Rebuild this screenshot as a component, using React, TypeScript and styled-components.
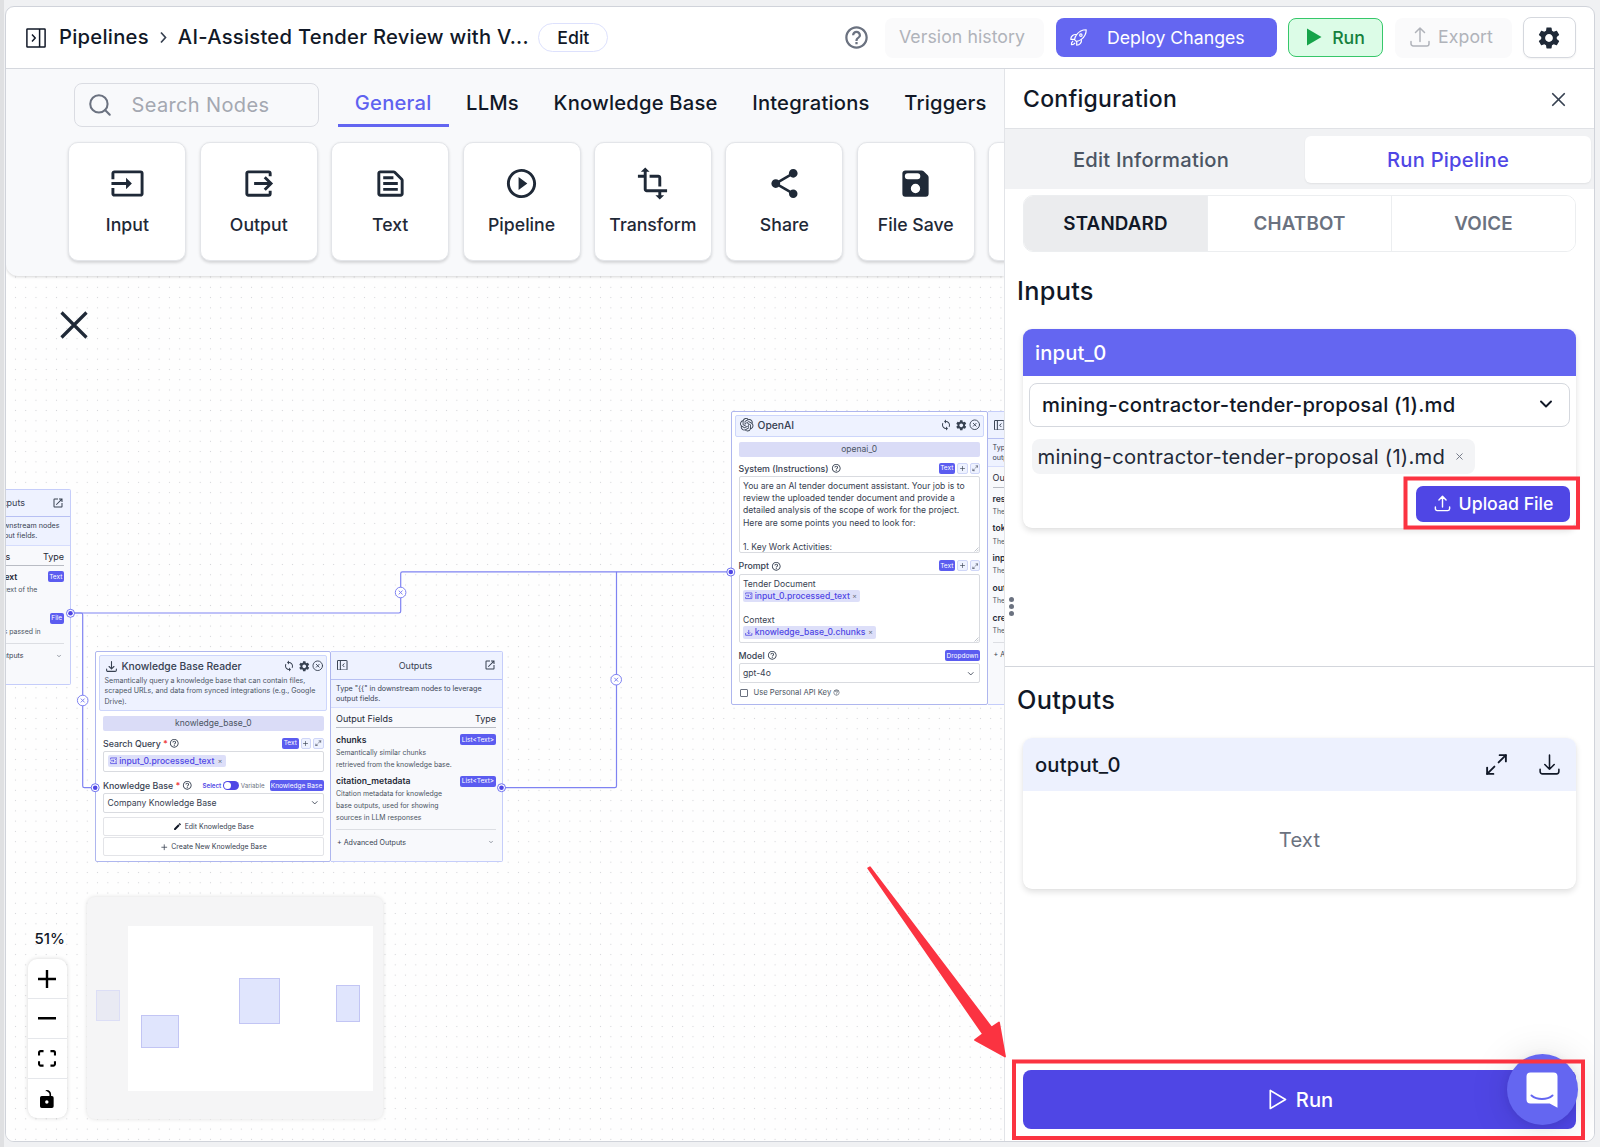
import React from "react";
import styled, { createGlobalStyle, css } from "styled-components";
import {
  MdInput,
  MdOutlineOutput,
  MdOutlineTextSnippet,
  MdPlayCircleOutline,
  MdTransform,
  MdShare,
  MdSettings,
  MdHelpOutline,
  MdSync,
  MdEdit,
  MdOpenInNew,
} from "react-icons/md";
import { HiOutlineRocketLaunch, HiOutlineArrowUpTray, HiOutlineArrowDownTray } from "react-icons/hi2";
import { SiOpenai } from "react-icons/si";
import { ChevronDown, CircleX, Maximize2, Plus, Search, X } from "lucide-react";

const Global = createGlobalStyle`
  *, *::before, *::after { box-sizing: border-box; }
  body {
    margin: 0;
    font-family: Inter, "Liberation Sans", sans-serif;
    color: #111827;
    background: #f0f1f3;
  }
  button { font: inherit; color: inherit; cursor: pointer; }
  svg { display: block; flex: none; }
`;

/* ---------- shell ---------- */

const Page = styled.div`
  position: relative;
  width: 1600px;
  height: 1147px;
  overflow: hidden;
  padding: 6px 5px 5px 5px;
  background: linear-gradient(90deg, #dfe0e2 4px, #f0f1f3 4px);
`;

const Window = styled.div`
  display: flex;
  flex-direction: column;
  width: 1590px;
  height: 1136px;
  border: 1px solid #d0d3da;
  border-radius: 9px;
  background: #fff;
  overflow: hidden;
`;

const Header = styled.header`
  display: flex;
  align-items: center;
  flex: none;
  height: 62px;
  padding: 0 18.5px 0 19.5px;
  border-bottom: 1px solid #d5d8de;
`;

const Crumbs = styled.nav`
  display: flex;
  align-items: center;
  padding-bottom: 2px;
  font-size: 20.2px;
  font-weight: 500;
  letter-spacing: 0.27px;
  color: #111827;
`;

const Crumb = styled.span<{ $left: number; $width?: number }>`
  margin-left: ${(p) => p.$left}px;
  width: ${(p) => (p.$width ? p.$width + "px" : "auto")};
  white-space: nowrap;
`;

const EditPill = styled.button`
  width: 70px;
  height: 29px;
  margin-left: 10.5px;
  padding: 0 0 1px;
  border: 1.3px solid #dde1fd;
  border-radius: 15px;
  background: #fff;
  font-size: 17.7px;
  font-weight: 500;
`;

const Actions = styled.div`
  display: flex;
  align-items: center;
  gap: 11.5px;
  margin-left: auto;
`;

const HelpIcon = styled.span`
  margin-right: 3.5px;
  color: #6b7280;
`;

const ActionButton = styled.button<{ $kind: "muted" | "primary" | "success" | "plain"; $w: number }>`
  display: flex;
  align-items: center;
  justify-content: center;
  width: ${(p) => p.$w}px;
  height: 40px;
  padding: 0 0 1px;
  border: 1px solid transparent;
  border-radius: 8px;
  font-size: 17.7px;
  ${(p) =>
    p.$kind === "muted" &&
    css`
      padding: 0 5px 2px 0;
      background: #fafafb;
      color: #b0b3ba;
      letter-spacing: 0.06px;
    `}
  ${(p) =>
    p.$kind === "primary" &&
    css`
      height: 39px;
      justify-content: flex-start;
      padding-left: 12.5px;
      background: #6466f1;
      color: #fff;
      gap: 19px;
    `}
  ${(p) =>
    p.$kind === "success" &&
    css`
      height: 39px;
      background: #dcfce7;
      border: 1.4px solid #36c76a;
      color: #15803d;
      font-weight: 500;
      gap: 10px;
    `}
  ${(p) =>
    p.$kind === "plain" &&
    css`
      height: 41px;
      padding: 0;
      background: #fff;
      border: 1.4px solid #d5d8de;
      color: #1f2937;
      box-shadow: 0 1px 2px rgba(0, 0, 0, 0.05);
    `}
`;

const Body = styled.div`
  display: flex;
  flex: 1;
  min-height: 0;
`;

const Workspace = styled.main`
  display: flex;
  flex-direction: column;
  width: 998px;
  min-width: 0;
  overflow: hidden;
`;

/* ---------- node palette ---------- */

const Palette = styled.section`
  position: relative;
  z-index: 3;
  flex: none;
  height: 207px;
  background: #f8f9fb;
  border-radius: 0 0 0 12px;
  box-shadow: 0 1px 3px rgba(0, 0, 0, 0.16);
  overflow: hidden;
`;

const PaletteTop = styled.div`
  display: flex;
  height: 73px;
  padding: 14px 0 0 68px;
`;

const SearchBox = styled.div`
  display: flex;
  align-items: center;
  gap: 18.5px;
  width: 245px;
  height: 44px;
  padding-left: 12px;
  border: 1.3px solid #dadce2;
  border-radius: 8px;
  color: #a4a8b1;
  font-size: 20px;
  letter-spacing: 0.36px;
`;

const Tabs = styled.div`
  display: flex;
  height: 45px;
  margin-left: 18.5px;
`;

const Tab = styled.button<{ $active?: boolean }>`
  height: 44px;
  padding: 0 17.3px 3px;
  border: 0;
  border-bottom: 3px solid ${(p) => (p.$active ? "#6366f1" : "transparent")};
  background: none;
  color: ${(p) => (p.$active ? "#5f62f0" : "#111827")};
  font-size: 20.2px;
  font-weight: 500;
  letter-spacing: 0.2px;
  white-space: nowrap;
`;

const CardRow = styled.div`
  display: flex;
  gap: 13.4px;
  padding-left: 62.4px;
`;

const NodeCard = styled.button`
  display: flex;
  flex-direction: column;
  align-items: center;
  flex: none;
  width: 118px;
  height: 119px;
  padding: 23px 0 0;
  border: 1px solid #e3e5e9;
  border-radius: 10px;
  background: #fff;
  box-shadow: 0 1.5px 3px rgba(0, 0, 0, 0.14);
  color: #1f2937;
  font-size: 17.7px;
  font-weight: 500;
  line-height: 22px;
  gap: 13px;
`;

/* ---------- canvas ---------- */

const Canvas = styled.section`
  position: relative;
  flex: 1;
  overflow: hidden;
  background-color: #fefefe;
  background-image: radial-gradient(circle at 50% 50%, #d3d4d8 0.55px, transparent 0.95px);
  background-size: 10.27px 10.27px;
  background-position: 4.3px 6.2px;
`;

const At = styled.div<{ $x: number; $y: number }>`
  position: absolute;
  left: ${(p) => p.$x - 6}px;
  top: ${(p) => p.$y - 276}px;
`;

const Edges = styled.svg`
  position: absolute;
  left: 0;
  top: 0;
`;

const NodeShell = styled(At)`
  display: flex;
`;

const NodeMain = styled.div<{ $w: number; $h: number }>`
  position: relative;
  width: ${(p) => p.$w}px;
  height: ${(p) => p.$h}px;
  padding: 3px;
  border: 1.3px solid #aeb6ee;
  border-radius: 2px;
  background: #fff;
`;

const NodeHead = styled.div<{ $h: number; $pt?: number }>`
  height: ${(p) => p.$h}px;
  padding: ${(p) => p.$pt ?? 4}px 2.2px 0 4.5px;
  border: 1px solid #cdd6fb;
  border-radius: 2px;
  background: #eef2ff;
`;

const NodeTitleRow = styled.div`
  display: flex;
  align-items: center;
  height: 13px;
  color: #374151;
`;

const NodeTitle = styled.span`
  margin-left: 4px;
  font-size: 10.3px;
  font-weight: 500;
  white-space: nowrap;
`;

const HeadTools = styled.span`
  display: flex;
  align-items: center;
  gap: 2.8px;
  margin-left: auto;

  svg:last-child {
    margin-left: -1.2px;
  }
`;

const NodeDesc = styled.div`
  margin-top: 3.6px;
  font-size: 7.1px;
  line-height: 10.2px;
  color: #4b5563;
  white-space: nowrap;
`;

const NodeBody = styled.div`
  display: flex;
  flex-direction: column;
  padding: 5px 3.5px 0 4px;
`;

const NameBar = styled.div`
  height: 15px;
  border-radius: 2px;
  background: #dadcf7;
  color: #4b5563;
  font-size: 8.5px;
  line-height: 15px;
  text-align: center;
`;

const LabelRow = styled.div<{ $mt: number }>`
  display: flex;
  align-items: center;
  height: 12px;
  margin-top: ${(p) => p.$mt}px;
  color: #374151;
  font-size: 8.8px;
  font-weight: 500;
  white-space: nowrap;
`;

const Star = styled.b`
  margin: 0 1.5px 0 2.3px;
  color: #ef4444;
`;

const LabelTools = styled.span`
  display: flex;
  align-items: center;
  gap: 2px;
  margin-left: auto;
`;

const Badge = styled.span<{ $w?: number; $ml?: number }>`
  display: flex;
  align-items: center;
  justify-content: center;
  width: ${(p) => p.$w ?? 16.5}px;
  height: 11px;
  margin-left: ${(p) => p.$ml ?? 0}px;
  border-radius: 2px;
  background: #5b5cf0;
  color: #fff;
  font-size: 6.5px;
  font-weight: 400;
  white-space: nowrap;
`;

const MiniButton = styled.span`
  display: flex;
  align-items: center;
  justify-content: center;
  width: 10.5px;
  height: 11px;
  border: 0.8px solid #cfd6f8;
  border-radius: 2px;
  background: #eef2ff;
  color: #374151;
`;

const Field = styled.div<{ $h: number; $mt?: number; $pt?: number }>`
  position: relative;
  height: ${(p) => p.$h}px;
  margin-top: ${(p) => p.$mt ?? 1}px;
  padding: ${(p) => p.$pt ?? 0}px 3.5px 0;
  border: 1px solid #d9dbe0;
  border-radius: 2px;
  background: #fff;
  color: #374151;
  font-size: 8.58px;
  line-height: 12.1px;
  white-space: pre;
`;

const SelectField = styled(Field)`
  display: flex;
  align-items: center;
  justify-content: space-between;
`;

const Grip = styled.svg`
  position: absolute;
  right: 0;
  bottom: 0;
`;

const Chip = styled.span<{ $w: number }>`
  display: flex;
  align-items: center;
  width: ${(p) => p.$w}px;
  height: 12.4px;
  padding: 0 3px 0 2px;
  border-radius: 2px;
  background: #dddff9;
  color: #4f46e5;
  font-size: 8.6px;
  font-weight: 500;
  gap: 2.2px;
`;

const ChipClose = styled.span`
  margin-left: auto;
  color: #6b7280;
  font-size: 7px;
  font-weight: 400;
`;

const ToggleText = styled.span<{ $on?: boolean }>`
  color: ${(p) => (p.$on ? "#4f46e5" : "#6b7280")};
  font-size: 6.2px;
  font-weight: ${(p) => (p.$on ? 600 : 400)};
`;

const Toggle = styled.span`
  display: flex;
  width: 15.5px;
  height: 9px;
  padding: 0.8px;
  border-radius: 5px;
  background: #4f46e5;

  &::before {
    content: "";
    width: 7.4px;
    height: 7.4px;
    border-radius: 50%;
    background: #fff;
  }
`;

const SmallButton = styled.div<{ $mt: number }>`
  display: flex;
  align-items: center;
  justify-content: center;
  gap: 3px;
  height: 19px;
  margin-top: ${(p) => p.$mt}px;
  border: 1px solid #e3e4e8;
  border-radius: 2px;
  color: #374151;
  font-size: 6.95px;
`;

const CheckRow = styled.div`
  display: flex;
  align-items: center;
  gap: 5.5px;
  margin: 5px 0 0 1.5px;
  height: 9px;
  color: #4b5563;
  font-size: 7.65px;

  &::before {
    content: "";
    width: 8px;
    height: 8px;
    border: 0.9px solid #6b7280;
    border-radius: 1px;
  }

  svg {
    margin-left: -3.5px;
  }
`;

const OutPanel = styled.div<{ $w: number; $h: number }>`
  width: ${(p) => p.$w}px;
  height: ${(p) => p.$h}px;
  border: 1px solid #c5cdfa;
  border-left: 0;
  border-radius: 0 2px 2px 0;
  background: #f8f9fc;
`;

const OutHead = styled.div<{ $h: number }>`
  display: flex;
  align-items: center;
  justify-content: space-between;
  height: ${(p) => p.$h}px;
  padding: 0 6px;
  border-bottom: 1px solid #b7c0f3;
  background: #eef2ff;
  color: #374151;
  font-size: 9px;
`;

const OutHint = styled.div`
  height: 28.5px;
  padding: 4px 9px 0 5px;
  border-bottom: 1px solid #d5dcfc;
  background: #eef2ff;
  color: #374151;
  font-size: 7.15px;
  line-height: 10.4px;
`;

const OutBody = styled.div`
  padding: 4px 5.5px 0 5px;
`;

const OutFieldsHead = styled.div`
  display: flex;
  justify-content: space-between;
  height: 16.3px;
  border-bottom: 1px solid #b9bcc4;
  color: #1f2937;
  font-size: 9px;
  line-height: 13px;
`;

const OutRow = styled.div`
  padding-top: 5.2px;
  & + & {
    margin-top: 3.6px;
    padding-top: 1px;
  }
`;

const OutName = styled.div`
  display: flex;
  align-items: center;
  justify-content: space-between;
  height: 12px;
  color: #1f2937;
  font-size: 8.6px;
  font-weight: 600;
`;

const OutDesc = styled.div`
  margin-top: 1.3px;
  color: #4b5563;
  font-size: 6.9px;
  line-height: 11.8px;
  white-space: pre;
`;

const OutAdvanced = styled.div`
  display: flex;
  align-items: center;
  justify-content: space-between;
  margin-top: 5px;
  padding: 7.7px 2px 0 1px;
  border-top: 1px solid #dcdee3;
  color: #374151;
  font-size: 7.1px;
  white-space: nowrap;
`;

const ZoomLabel = styled(At)`
  width: 32px;
  text-align: center;
  font-size: 15px;
  font-weight: 500;
  line-height: 20px;
`;

const Controls = styled(At)`
  display: flex;
  flex-direction: column;
  width: 39px;
  border-radius: 9px;
  background: #fff;
  box-shadow: 0 0 4px rgba(0, 0, 0, 0.16);
`;

const ControlCell = styled.button`
  display: flex;
  align-items: center;
  justify-content: center;
  height: 40px;
  padding: 0;
  border: 0;
  border-bottom: 1px solid #e5e7eb;
  background: none;
  &:last-child {
    height: 39px;
    border-bottom: 0;
  }
`;

const MiniMap = styled(At)`
  width: 296px;
  height: 222px;
  border-radius: 8px;
  background: #f5f5f6;
  box-shadow: 0 0 4px rgba(0, 0, 0, 0.13);
`;

/* ---------- right panel ---------- */

const Panel = styled.aside`
  display: flex;
  flex-direction: column;
  position: relative;
  width: 590px;
  border-left: 1px solid #e2e4e8;
  background: #fff;
`;

const PanelHead = styled.div`
  display: flex;
  align-items: center;
  justify-content: space-between;
  height: 60px;
  padding: 1px 24px 0 18px;
  border-bottom: 1px solid #e0e2e6;
  font-size: 23px;
  font-weight: 500;
  letter-spacing: 0.28px;
`;

const PanelTabs = styled.div`
  display: flex;
  gap: 11px;
  height: 60px;
  padding: 7px 3px 6px;
  background: #f1f2f4;
`;

const PanelTab = styled.button<{ $active?: boolean }>`
  flex: 1;
  padding: 0 0 1px;
  border: 0;
  border-radius: 6px;
  background: ${(p) => (p.$active ? "#fff" : "transparent")};
  box-shadow: ${(p) => (p.$active ? "0 1px 2px rgba(0,0,0,.07)" : "none")};
  color: ${(p) => (p.$active ? "#4f46e5" : "#4b5563")};
  font-size: 20.2px;
  font-weight: 500;
  letter-spacing: 0.22px;
`;

const Modes = styled.div`
  display: flex;
  flex: none;
  width: 553px;
  height: 57px;
  margin: 6px 0 0 18px;
  border: 1px solid #eceef0;
  border-radius: 10px;
  overflow: hidden;
`;

const Mode = styled.button<{ $active?: boolean }>`
  flex: 1;
  padding: 0;
  border: 0;
  border-right: 1px solid #eceef0;
  background: ${(p) => (p.$active ? "#ebecee" : "#fff")};
  color: ${(p) => (p.$active ? "#111827" : "#6b7280")};
  font-size: 18.8px;
  font-weight: 600;
  letter-spacing: 0.15px;
  &:last-child {
    border-right: 0;
  }
`;

const SectionTitle = styled.h2<{ $top: number }>`
  margin: ${(p) => p.$top}px 0 0 12px;
  font-size: 25.3px;
  font-weight: 500;
  line-height: 32px;
  letter-spacing: 0.3px;
`;

const IoCard = styled.div<{ $h: number; $mt: number }>`
  flex: none;
  width: 553px;
  height: ${(p) => p.$h}px;
  margin: ${(p) => p.$mt}px 0 0 18px;
  border-radius: 9px;
  background: #fff;
  box-shadow: 0 3px 6px rgba(0, 0, 0, 0.12), 0 0 2px rgba(0, 0, 0, 0.04);
`;

const IoHead = styled.div<{ $tone: "solid" | "light" }>`
  display: flex;
  align-items: center;
  height: ${(p) => (p.$tone === "solid" ? 47 : 53)}px;
  padding: 0 14px 0 12px;
  gap: 28px;
  border-radius: 9px 9px 0 0;
  background: ${(p) => (p.$tone === "solid" ? "#6466f1" : "#edf1fe")};
  color: ${(p) => (p.$tone === "solid" ? "#fff" : "#111827")};
  font-size: 20.2px;
  font-weight: 500;
  letter-spacing: 0.18px;

  span {
    flex: 1;
  }
`;

const IoBody = styled.div`
  display: flex;
  flex-direction: column;
  padding: 7px 6px 0;
`;

const FileSelect = styled.div`
  display: flex;
  align-items: center;
  justify-content: space-between;
  height: 44px;
  padding: 0 13px 1.5px 12px;
  border: 1.4px solid #d5d8de;
  border-radius: 8px;
  font-size: 20.2px;
  font-weight: 500;
  letter-spacing: 0.235px;
`;

const FileChip = styled.div`
  display: flex;
  align-items: center;
  gap: 9px;
  width: 443px;
  height: 35px;
  margin: 12px 0 0 3px;
  padding: 0 0 1px 5.5px;
  border-radius: 8px;
  background: #f3f4f6;
  color: #1f2937;
  font-size: 20.2px;
  letter-spacing: 0.235px;
  white-space: nowrap;
`;

const UploadButton = styled.button`
  display: flex;
  align-items: center;
  justify-content: center;
  gap: 7px;
  align-self: flex-end;
  width: 154px;
  height: 36px;
  margin-top: 12px;
  padding: 0 0 2px;
  border: 0;
  border-radius: 7px;
  background: #4f46e5;
  color: #fff;
  font-size: 17.7px;
  font-weight: 500;
`;

const OutputPlaceholder = styled.div`
  display: flex;
  align-items: center;
  justify-content: center;
  height: 98px;
  color: #6b7280;
  font-size: 20.2px;
  letter-spacing: 0.15px;
`;

const PanelDivider = styled.div`
  height: 1px;
  margin-top: 138px;
  background: #d3d6dc;
`;

const RunButton = styled.button`
  display: flex;
  align-items: center;
  justify-content: center;
  gap: 9px;
  width: 553px;
  height: 59px;
  margin: auto 0 12px 18px;
  padding: 0 0 0 3px;
  border: 0;
  border-radius: 8px;
  background: #4f46e5;
  color: #fff;
  font-size: 20.2px;
  font-weight: 500;
`;

const ResizeDots = styled.div`
  position: absolute;
  left: 3.5px;
  top: 527.5px;
  display: grid;
  gap: 2.2px;

  i {
    width: 5.2px;
    height: 5.2px;
    border-radius: 50%;
    background: #6b7280;
  }
`;

const ChatBubble = styled.div`
  position: absolute;
  right: 16.5px;
  bottom: 16px;
  display: grid;
  place-items: center;
  width: 71px;
  height: 71px;
  border-radius: 50%;
  background: #6466f1;
  box-shadow: 0 1px 8px rgba(0, 0, 0, 0.08), 0 3px 40px rgba(0, 0, 0, 0.13);
`;

const Annotations = styled.svg`
  position: absolute;
  left: 0;
  top: 0;
  pointer-events: none;
`;

/* ---------- icons ---------- */

const PanelToggle = ({ size, flip, stroke = 1.5 }: { size: number; flip?: boolean; stroke?: number }) => (
  <svg width={size} height={size} viewBox="0 0 20 20" fill="none" stroke="currentColor" strokeWidth={stroke}>
    <g transform={flip ? "translate(20 0) scale(-1 1)" : undefined}>
      <rect x="0.9" y="0.9" width="18.2" height="18.2" rx="0.6" />
      <path d="M13.6 1v18M6 6.6 9.2 10 6 13.4" />
    </g>
  </svg>
);

const SaveIcon = () => (
  <svg width="35" height="35" viewBox="0 0 24 24" fill="currentColor">
    <path
      fillRule="evenodd"
      d="M5 3h11.2c.5 0 1 .2 1.4.6l2.8 2.8c.4.4.6.9.6 1.4V19a2 2 0 0 1-2 2H5a2 2 0 0 1-2-2V5c0-1.100.9-2 2-2Zm1.700 2a1.900 1.900 0 0 0 0 4h6.600a1.900 1.900 0 0 0 0-4H6.700ZM12 12.200a3.200 3.200 0 1 0 0 6.400 3.200 3.200 0 0 0 0-6.400Z"
    />
  </svg>
);

const ChipInputIcon = () => (
  <svg width="7.5" height="7.5" viewBox="0 0 12 12" fill="none" stroke="currentColor" strokeWidth="1.2">
    <path d="M1 4V1.500h10v9H1V8M1 6h5M4.500 4.200 6.500 6l-2 1.800M8 4h1.500M8 8h1.500" />
  </svg>
);

const ChipReaderIcon = () => (
  <svg width="7.5" height="7.5" viewBox="0 0 12 12" fill="none" stroke="currentColor" strokeWidth="1.3">
    <path d="M1 6.500v3.500h10V6.500M6 1.500v6M3.800 5.500 6 7.700l2.200-2.200" />
  </svg>
);

/* ---------- pieces ---------- */

const nodeCards = [
  { label: "Input", icon: <MdInput size={35} /> },
  { label: "Output", icon: <MdOutlineOutput size={35} /> },
  { label: "Text", icon: <MdOutlineTextSnippet size={35} /> },
  { label: "Pipeline", icon: <MdPlayCircleOutline size={35} /> },
  { label: "Transform", icon: <MdTransform size={35} /> },
  { label: "Share", icon: <MdShare size={35} /> },
  { label: "File Save", icon: <SaveIcon /> },
  { label: "", icon: null },
];

type OutputField = { name: string; type: string; badge: number; desc: string };

const OutputsPanel = ({ w, h, headH = 27.5, fields }: { w: number; h: number; headH?: number; fields: OutputField[] }) => (
  <OutPanel $w={w} $h={h}>
    <OutHead $h={headH}>
      <PanelToggle size={10.5} stroke={1.9} flip />
      <span>Outputs</span>
      <MdOpenInNew size={12} />
    </OutHead>
    <OutHint>Type "{"{{"}" in downstream nodes to leverage output fields.</OutHint>
    <OutBody>
      <OutFieldsHead>
        <span>Output Fields</span>
        <span>Type</span>
      </OutFieldsHead>
      {fields.map((f) => (
        <OutRow key={f.name}>
          <OutName>
            {f.name}
            <Badge $w={f.badge}>{f.type}</Badge>
          </OutName>
          <OutDesc>{f.desc}</OutDesc>
        </OutRow>
      ))}
      <OutAdvanced>
        <span>+ Advanced Outputs</span>
        <ChevronDown size={6} strokeWidth={2} />
      </OutAdvanced>
    </OutBody>
  </OutPanel>
);

const HeaderTools = () => (
  <HeadTools>
    <MdSync size={12} />
    <MdSettings size={12.5} />
    <CircleX size={11.5} strokeWidth={1.9} />
  </HeadTools>
);

const TextTools = () => (
  <LabelTools>
    <Badge>Text</Badge>
    <MiniButton><Plus size={7} strokeWidth={2.2} /></MiniButton>
    <MiniButton><Maximize2 size={6.5} strokeWidth={2.2} /></MiniButton>
  </LabelTools>
);

const ResizeGrip = () => (
  <Grip width="5" height="5" viewBox="0 0 5 5" stroke="#9ca3af" strokeWidth="0.6">
    <path d="M0.500 4.500 4.500 0.500M2.700 4.500 4.500 2.700" />
  </Grip>
);

const Port = ({ x, y }: { x: number; y: number }) => (
  <g>
    <circle cx={x} cy={y} r="4" fill="#fff" stroke="#5f62ee" strokeWidth="0.9" />
    <circle cx={x} cy={y} r="2.3" fill="#4f46e5" />
  </g>
);

const EdgeRemove = ({ x, y }: { x: number; y: number }) => (
  <g stroke="#7f83f2" fill="#fff" strokeWidth="1">
    <circle cx={x} cy={y} r="5.3" />
    <path d={`M${x - 1.9} ${y - 1.9}l3.8 3.8m0-3.8l-3.8 3.8`} />
  </g>
);

export default function App() {
  return (
    <Page>
      <Global />
      <Window>
        <Header>
          <PanelToggle size={20} />
          <Crumbs>
            <Crumb $left={13.5}>Pipelines</Crumb>
            <Crumb $left={10}>
              <svg width="9" height="14" viewBox="0 0 9 14" fill="none" stroke="#374151" strokeWidth="1.7">
                <path d="M2 2.500 6.500 7.500 2 12.500" />
              </svg>
            </Crumb>
            <Crumb $left={10} $width={350}>AI-Assisted Tender Review with V...</Crumb>
          </Crumbs>
          <EditPill>Edit</EditPill>
          <Actions>
            <HelpIcon><MdHelpOutline size={27} /></HelpIcon>
            <ActionButton $kind="muted" $w={159}>Version history</ActionButton>
            <ActionButton $kind="primary" $w={221}>
              <HiOutlineRocketLaunch size={19} />
              Deploy Changes
            </ActionButton>
            <ActionButton $kind="success" $w={95}>
              <svg width="16" height="18" viewBox="0 0 16 18" fill="#16a34a">
                <path d="M1 0.500v17L15.500 9z" />
              </svg>
              Run
            </ActionButton>
            <ActionButton $kind="muted" $w={117}>
              <HiOutlineArrowUpTray size={24} style={{ marginRight: 6 }} />
              Export
            </ActionButton>
            <ActionButton $kind="plain" $w={52.5}><MdSettings size={26} /></ActionButton>
          </Actions>
        </Header>

        <Body>
          <Workspace>
            <Palette>
              <PaletteTop>
                <SearchBox>
                  <Search size={26} strokeWidth={1.9} color="#6b7280" />
                  Search Nodes
                </SearchBox>
                <Tabs>
                  <Tab $active>General</Tab>
                  <Tab>LLMs</Tab>
                  <Tab>Knowledge Base</Tab>
                  <Tab>Integrations</Tab>
                  <Tab>Triggers</Tab>
                </Tabs>
              </PaletteTop>
              <CardRow>
                {nodeCards.map((c, i) => (
                  <NodeCard key={i}>
                    {c.icon}
                    {c.label}
                  </NodeCard>
                ))}
              </CardRow>
            </Palette>

            <Canvas>
              <At $x={59.5} $y={310.5}>
                <svg width="28" height="28" viewBox="0 0 28 28" stroke="#1f2937" strokeWidth="3.2">
                  <path d="M1.500 1.500l25 25M26.500 1.500l-25 25" />
                </svg>
              </At>

              <Edges width="998" height="866" viewBox="6 276 998 866" fill="none" stroke="#7f83f2" strokeWidth="1.2">
                <path d="M70.500 613H399q1.700 0 1.700-1.700V573.500q0-1.700 1.700-1.700H731" />
                <path d="M70.500 613H81q1.700 0 1.700 1.700V786q0 1.700 1.700 1.700H95" />
                <path d="M502 787.700H614.800q1.700 0 1.700-1.700V571.800" />
              </Edges>

              <NodeShell $x={-51.5} $y={488.5}>
                <OutputsPanel
                  w={122}
                  h={196.5}
                  fields={[
                    { name: "processed_text", type: "Text", badge: 16.5, desc: "The processed text of the\ninput file" },
                    { name: "file", type: "File", badge: 14.5, desc: "The file that was passed in" },
                  ]}
                />
              </NodeShell>

              <NodeShell $x={95} $y={650.5}>
                <NodeMain $w={236} $h={211.5}>
                  <NodeHead $h={56}>
                    <NodeTitleRow>
                      <HiOutlineArrowDownTray size={13} strokeWidth={2} />
                      <NodeTitle>Knowledge Base Reader</NodeTitle>
                      <HeaderTools />
                    </NodeTitleRow>
                    <NodeDesc>
                      Semantically query a knowledge base that can contain files,
                      <br />
                      scraped URLs, and data from synced integrations (e.g., Google
                      <br />
                      Drive).
                    </NodeDesc>
                  </NodeHead>
                  <NodeBody>
                    <NameBar>knowledge_base_0</NameBar>
                    <LabelRow $mt={6.5}>
                      Search Query <Star>*</Star>
                      <MdHelpOutline size={10.5} />
                      <TextTools />
                    </LabelRow>
                    <SelectField $h={21} $mt={1.5}>
                      <Chip $w={118}>
                        <ChipInputIcon />
                        input_0.processed_text
                        <ChipClose>×</ChipClose>
                      </Chip>
                    </SelectField>
                    <LabelRow $mt={8}>
                      Knowledge Base <Star>*</Star>
                      <MdHelpOutline size={10.5} />
                      <LabelTools>
                        <ToggleText $on>Select</ToggleText>
                        <Toggle />
                        <ToggleText>Variable</ToggleText>
                        <Badge $w={54} $ml={3}>Knowledge Base</Badge>
                      </LabelTools>
                    </LabelRow>
                    <SelectField $h={20.5} $mt={1.3}>
                      Company Knowledge Base
                      <ChevronDown size={9.5} strokeWidth={2.2} />
                    </SelectField>
                    <SmallButton $mt={4.2}>
                      <MdEdit size={9} color="#111827" />
                      Edit Knowledge Base
                    </SmallButton>
                    <SmallButton $mt={1}>
                      <Plus size={8.5} strokeWidth={2.2} />
                      Create New Knowledge Base
                    </SmallButton>
                  </NodeBody>
                </NodeMain>
                <OutputsPanel
                  w={171.5}
                  h={211.5}
                  headH={28.2}
                  fields={[
                    {
                      name: "chunks",
                      type: "List<Text>",
                      badge: 36,
                      desc: "Semantically similar chunks\nretrieved from the knowledge base.",
                    },
                    {
                      name: "citation_metadata",
                      type: "List<Text>",
                      badge: 36,
                      desc: "Citation metadata for knowledge\nbase outputs, used for showing\nsources in LLM responses",
                    },
                  ]}
                />
              </NodeShell>

              <NodeShell $x={730.5} $y={411}>
                <NodeMain $w={257} $h={293.5}>
                  <NodeHead $h={21.5} $pt={2.7}>
                    <NodeTitleRow>
                      <SiOpenai size={13.5} />
                      <NodeTitle>OpenAI</NodeTitle>
                      <HeaderTools />
                    </NodeTitleRow>
                  </NodeHead>
                  <NodeBody>
                    <NameBar>openai_0</NameBar>
                    <LabelRow $mt={5.8}>
                      System (Instructions)&nbsp;<MdHelpOutline size={10.5} />
                      <TextTools />
                    </LabelRow>
                    <Field $h={77.5} $mt={1.5} $pt={3.5}>
                      {"You are an AI tender document assistant. Your job is to\nreview the uploaded tender document and provide a\ndetailed analysis of the scope of work for the project.\nHere are some points you need to look for:\n\n1. Key Work Activities:"}
                      <ResizeGrip />
                    </Field>
                    <LabelRow $mt={6.5}>
                      Prompt&nbsp;<MdHelpOutline size={10.5} />
                      <TextTools />
                    </LabelRow>
                    <Field $h={69.5} $mt={1.8} $pt={3}>
                      <div>Tender Document</div>
                      <Chip $w={117}>
                        <ChipInputIcon />
                        input_0.processed_text
                        <ChipClose>×</ChipClose>
                      </Chip>
                      <div>{"\nContext"}</div>
                      <Chip $w={133}>
                        <ChipReaderIcon />
                        knowledge_base_0.chunks
                        <ChipClose>×</ChipClose>
                      </Chip>
                      <ResizeGrip />
                    </Field>
                    <LabelRow $mt={6.5}>
                      Model&nbsp;<MdHelpOutline size={10.5} />
                      <LabelTools><Badge $w={35}>Dropdown</Badge></LabelTools>
                    </LabelRow>
                    <SelectField $h={20} $mt={1.8}>
                      gpt-4o
                      <ChevronDown size={9.5} strokeWidth={2.2} />
                    </SelectField>
                    <CheckRow>
                      <span>Use Personal API Key</span>
                      <MdHelpOutline size={7} />
                    </CheckRow>
                  </NodeBody>
                </NodeMain>
                <OutputsPanel
                  w={171.5}
                  h={293.5}
                  headH={26.8}
                  fields={[
                    { name: "response", type: "Text", badge: 16.5, desc: "The response from the model" },
                    { name: "tokens_used", type: "Text", badge: 16.5, desc: "The number of tokens used" },
                    { name: "input_tokens", type: "Text", badge: 16.5, desc: "The number of input tokens" },
                    { name: "output_tokens", type: "Text", badge: 16.5, desc: "The number of output tokens" },
                    { name: "credits_used", type: "Text", badge: 16.5, desc: "The number of credits used" },
                  ]}
                />
              </NodeShell>

              <Edges width="998" height="866" viewBox="6 276 998 866" fill="none">
                <Port x={70.5} y={613.3} />
                <Port x={95.2} y={787.7} />
                <Port x={501.5} y={787.7} />
                <Port x={730.8} y={572} />
                <EdgeRemove x={82.7} y={700.5} />
                <EdgeRemove x={400.6} y={592.5} />
                <EdgeRemove x={616.2} y={679.7} />
              </Edges>

              <ZoomLabel $x={33.8} $y={929}>51%</ZoomLabel>
              <Controls $x={27.7} $y={959.3}>
                <ControlCell>
                  <svg width="18" height="18" viewBox="0 0 32 32"><path d="M32 18.133H18.133V32h-4.266V18.133H0v-4.266h13.867V0h4.266v13.867H32z" /></svg>
                </ControlCell>
                <ControlCell>
                  <svg width="18" height="3" viewBox="0 0 32 5"><path d="M0 0h32v4.200H0z" /></svg>
                </ControlCell>
                <ControlCell>
                  <svg width="18" height="17" viewBox="0 0 32 30"><path d="M3.692 4.630c0-.53.4-.938.939-.938h5.215V0H4.708C2.130 0 0 2.054 0 4.630v5.216h3.692V4.631zM27.354 0h-5.200v3.692h5.170c.53 0 .984.4.984.939v5.215H32V4.631A4.624 4.624 0 0027.354 0zm.954 24.830c0 .532-.4.940-.939.940h-5.215v3.768h5.215c2.577 0 4.631-2.130 4.631-4.707v-5.139h-3.692v5.139zm-23.677.940c-.531 0-.939-.4-.939-.940v-5.138H0v5.139c0 2.577 2.130 4.707 4.708 4.707h5.138V25.770H4.631z" /></svg>
                </ControlCell>
                <ControlCell>
                  <svg width="14" height="18" viewBox="0 0 25 32"><path d="M21.333 10.667H19.810V7.619C19.810 3.429 16.380 0 12.190 0c-4.114 1.828-1.370 2.133.305 2.438 1.676.305 4.420 2.590 4.420 5.181v3.048H3.047A3.056 3.056 0 000 13.714v15.238A3.056 3.056 0 003.048 32h18.285a3.056 3.056 0 003.048-3.048V13.714a3.056 3.056 0 00-3.048-3.047zM12.190 24.533a3.056 3.056 0 01-3.047-3.047 3.056 3.056 0 013.047-3.048 3.056 3.056 0 013.048 3.048 3.056 3.056 0 01-3.048 3.047z" /></svg>
                </ControlCell>
              </Controls>

              <MiniMap $x={87} $y={897}>
                <svg width="296" height="222" viewBox="87 897 296 222">
                  <rect x="128" y="926" width="245" height="165" fill="#fff" />
                  <rect x="96.5" y="990.5" width="23" height="30" fill="#e9eaf3" stroke="#dcdef6" />
                  <g fill="#e0e5fd" stroke="#c2c5f4">
                    <rect x="141.5" y="1015.5" width="37" height="32" />
                    <rect x="239.5" y="978.5" width="40" height="45" />
                    <rect x="336.5" y="985.5" width="23" height="36" />
                  </g>
                </svg>
              </MiniMap>
            </Canvas>
          </Workspace>

          <Panel>
            <PanelHead>
              Configuration
              <X size={23} strokeWidth={1.8} color="#374151" />
            </PanelHead>
            <PanelTabs>
              <PanelTab>Edit Information</PanelTab>
              <PanelTab $active>Run Pipeline</PanelTab>
            </PanelTabs>
            <Modes>
              <Mode $active>STANDARD</Mode>
              <Mode>CHATBOT</Mode>
              <Mode>VOICE</Mode>
            </Modes>

            <SectionTitle $top={23}>Inputs</SectionTitle>
            <IoCard $h={198.5} $mt={22}>
              <IoHead $tone="solid"><span>input_0</span></IoHead>
              <IoBody>
                <FileSelect>
                  mining-contractor-tender-proposal (1).md
                  <ChevronDown size={20} strokeWidth={2.3} />
                </FileSelect>
                <FileChip>
                  mining-contractor-tender-proposal (1).md
                  <X size={11} strokeWidth={2} color="#6b7280" />
                </FileChip>
                <UploadButton>
                  <HiOutlineArrowUpTray size={19} strokeWidth={1.8} />
                  Upload File
                </UploadButton>
              </IoBody>
            </IoCard>

            <PanelDivider />
            <SectionTitle $top={17}>Outputs</SectionTitle>
            <IoCard $h={151} $mt={22}>
              <IoHead $tone="light">
                <span>output_0</span>
                <Maximize2 size={25} strokeWidth={1.8} />
                <HiOutlineArrowDownTray size={25} />
              </IoHead>
              <OutputPlaceholder>Text</OutputPlaceholder>
            </IoCard>

            <RunButton>
              <svg width="18" height="21" viewBox="0 0 18 21" fill="none" stroke="#fff" strokeWidth="1.7" strokeLinejoin="round">
                <path d="M1.300 1.500v18L16.500 10.500z" />
              </svg>
              Run
            </RunButton>
            <ResizeDots><i /><i /><i /></ResizeDots>
            <ChatBubble>
              <svg width="32" height="36" viewBox="0 0 32 36" fill="#fff">
                <path d="M4.500 0.500h23A4 4 0 0 1 31.500 4.500v31.200l-7.800-4.100H4.500a4 4 0 0 1-4-4V4.500a4 4 0 0 1 4-4z" />
                <path d="M5.500 23.500c5.500 4.700 15.500 4.700 21 0" fill="none" stroke="#6466f1" strokeWidth="2" strokeLinecap="round" />
              </svg>
            </ChatBubble>
          </Panel>
        </Body>
      </Window>

      <Annotations width="1600" height="1147" viewBox="0 0 1600 1147" fill="none" stroke="#fb3341">
        <rect x="1405.5" y="478.5" width="172.5" height="49" strokeWidth="4" />
        <rect x="1014" y="1061.5" width="569" height="76.5" strokeWidth="4" />
        <path
          d="M868.200 868.300 870 867.300 991.500 1027.500 999 1022.500 1005 1056.500 975 1040 983 1034z"
          fill="#fb3341"
          strokeWidth="1.8"
          strokeLinejoin="round"
        />
      </Annotations>
    </Page>
  );
}
